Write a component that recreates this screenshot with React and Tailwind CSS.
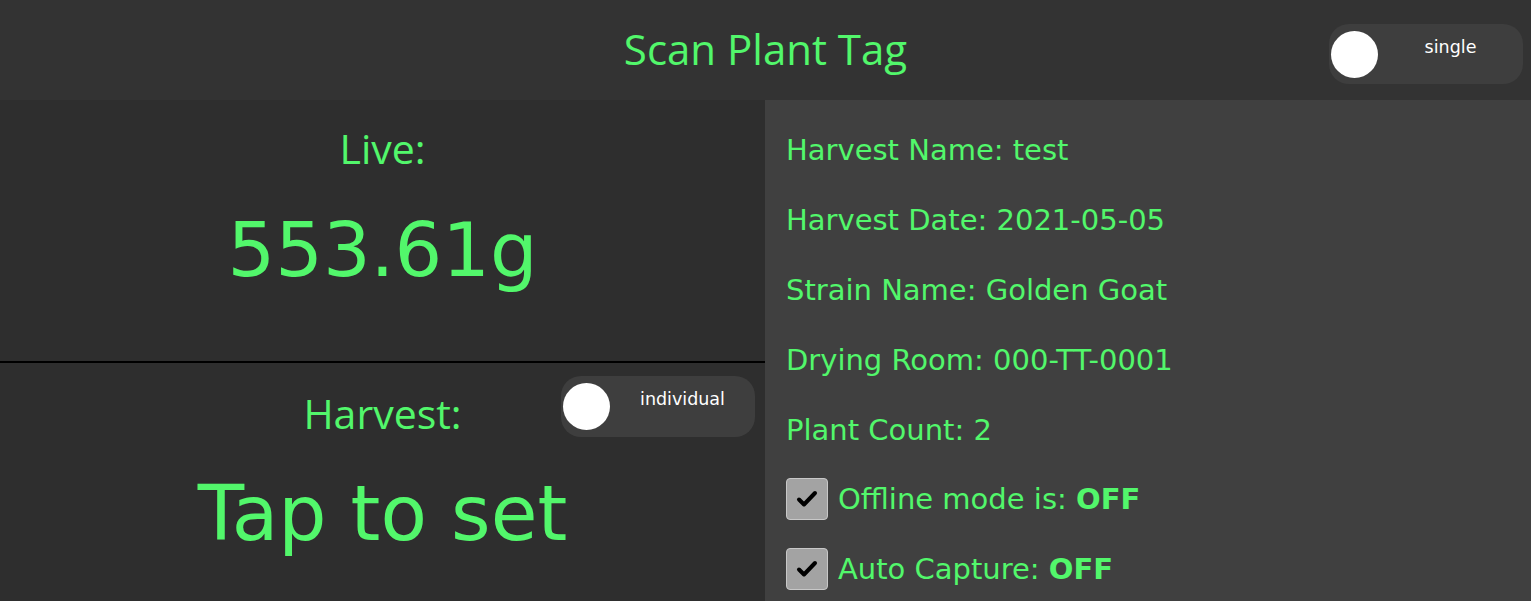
const green = "text-[#52f76b]";

const Toggle = ({ label, className }) => (
  <div className={`flex items-center rounded-[20px] bg-[#3e3e3e] ${className}`}>
    <div className="ml-[2px] h-[47px] w-[47px] shrink-0 rounded-full bg-white" />
    <span className="-mt-[14px] flex-1 text-center text-[17.5px] text-white">
      {label}
    </span>
  </div>
);

const Check = ({ children }) => (
  <div className="flex h-[70px] shrink-0 items-center gap-[10px]">
    <div className="mt-[-4px] flex h-[42px] w-[42px] items-center justify-center rounded-[4px] border border-[#c8c8c8] bg-[#a3a3a3]">
      <svg viewBox="0 0 24 24" className="h-[24px] w-[24px]" fill="none" stroke="#000" strokeWidth={4} strokeLinecap="round" strokeLinejoin="round">
        <path d="M4 12.5l5 5L20 6" />
      </svg>
    </div>
    <span className={`-mt-[2px] text-[29px] ${green}`}>{children}</span>
  </div>
);

export default function App() {
  return (
    <div className="h-[601px] w-[1531px] overflow-hidden bg-[#2e2e2e] font-['DejaVu_Sans',sans-serif]">
      {/* Header */}
      <header className="relative flex h-[100px] items-center justify-center bg-[#333333]">
        <h1 className={`-mt-[4px] text-[42px] font-['Open_Sans',sans-serif] ${green}`}>Scan Plant Tag</h1>
        <Toggle label="single" className="absolute right-[8px] top-[24px] h-[60px] w-[194px]" />
      </header>

      <div className="flex h-[501px]">
        {/* Left */}
        <div className="flex w-[765px] flex-col">
          <div className="flex h-[263px] flex-col items-center border-b-2 border-black">
            <div className={`mt-[18px] text-[41px] font-['Open_Sans',sans-serif] ${green}`}>Live:</div>
            <div className={`mt-[14px] text-[75px] ${green}`}>553.61g</div>
          </div>
          <div className="relative flex flex-1 flex-col items-center">
            <div className={`mt-[20px] text-[41px] font-['Open_Sans',sans-serif] ${green}`}>Harvest:</div>
            <div className={`mt-[12px] text-[76px] ${green}`}>Tap to set</div>
            <Toggle label="individual" className="absolute left-[561px] top-[13px] h-[61px] w-[194px]" />
          </div>
        </div>

        {/* Right */}
        <div className="flex flex-1 flex-col overflow-hidden bg-[#404040] pl-[21px] pt-[16px]">
          {[
            "Harvest Name: test",
            "Harvest Date: 2021-05-05",
            "Strain Name: Golden Goat",
            "Drying Room: 000-TT-0001",
            "Plant Count: 2",
          ].map((t) => (
            <div key={t} className={`flex h-[70px] shrink-0 items-center text-[29px] ${green}`}>
              {t}
            </div>
          ))}
          <Check>
            Offline mode is: <b>OFF</b>
          </Check>
          <Check>
            Auto Capture: <b>OFF</b>
          </Check>
        </div>
      </div>
    </div>
  );
}
